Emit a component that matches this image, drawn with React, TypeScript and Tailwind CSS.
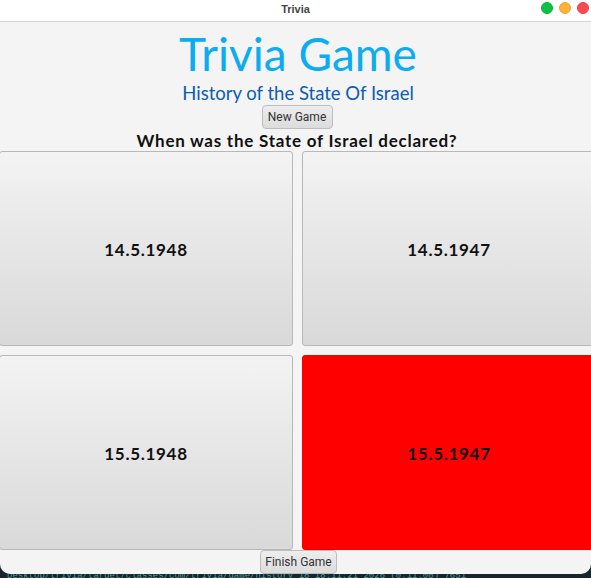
const comic = "font-['Comic_Sans_MS','Lato','Noto_Sans',sans-serif]";

function Answer({ label, wrong }: { label: string; wrong?: boolean }) {
  return (
    <button
      className={`flex h-[195px] items-center justify-center rounded-[3px] border pt-[3px] text-[17px] font-bold text-[#111] ${comic} tracking-[0.7px] ${
        wrong
          ? "border-[#f00000] bg-[#ff0000]"
          : "border-[#b8b8b8] bg-gradient-to-b from-[#f3f3f3] to-[#d9d9d9]"
      }`}
    >
      {label}
    </button>
  );
}

function SmallButton({ label, width }: { label: string; width: string }) {
  return (
    <button
      className={`flex h-[24px] items-center justify-center rounded-[4px] border border-[#bdbdbd] bg-gradient-to-b from-[#eeeeee] to-[#dcdcdc] font-['Roboto',sans-serif] text-[12px] text-[#333] ${width}`}
    >
      {label}
    </button>
  );
}

export default function App() {
  return (
    <div className="h-[578px] w-[591px] overflow-hidden bg-[#16262c]">
      <div className="relative z-10 h-[574px] overflow-hidden rounded-b-[10px] bg-[#f4f4f4]">
        <div className="relative flex h-[22px] items-center justify-center border-b border-[#d4d4d4] bg-white pb-[2px]">
          <span className="font-['Liberation_Sans',sans-serif] text-[11px] font-bold text-[#444]">Trivia</span>
          <div className="absolute right-[2px] top-[2px] flex gap-[6px]">
            <span className="h-[12px] w-[12px] rounded-full border border-[#0aae3a] bg-[#0dc143]" />
            <span className="h-[12px] w-[12px] rounded-full border border-[#f0a52e] bg-[#fcb13a]" />
            <span className="h-[12px] w-[12px] rounded-full border border-[#ee3b42] bg-[#fb4b50]" />
          </div>
        </div>

        <div className="flex w-[596px] flex-col items-center">
          <h1 className={`mt-[6px] h-[52px] text-[46px] leading-[52px] text-[#0cadf0] ${comic}`}>Trivia Game</h1>
          <p className={`mt-[1px] h-[24px] text-[18.5px] leading-[24px] text-[#0b5cb5] ${comic}`}>
            History of the State Of Israel
          </p>
          <div className="mr-[2px]">
            <SmallButton label="New Game" width="w-[71px]" />
          </div>
          <p className={`h-[22px] pt-[1px] text-[17px] font-bold leading-[22px] text-[#111] ${comic} mr-[2px] tracking-[0.75px]`}>
            When was the State of Israel declared?
          </p>

          <div className="-ml-px grid w-[597px] grid-cols-[294px_294px] gap-[9px] self-start">
            <Answer label="14.5.1948" />
            <Answer label="14.5.1947" />
            <Answer label="15.5.1948" />
            <Answer label="15.5.1947" wrong />
          </div>

          <div className="ml-[1px]">
            <SmallButton label="Finish Game" width="w-[77px]" />
          </div>
        </div>
      </div>
      <p className="-mt-[4px] whitespace-nowrap pl-[7px] font-['Liberation_Mono',monospace] text-[9px] leading-[12px] text-[#4f9c9c]">
        Desktop/trivia/target/classes/com/trivia/game/history 18 18:11:21 2026 (0:11:00) 7651
      </p>
    </div>
  );
}
